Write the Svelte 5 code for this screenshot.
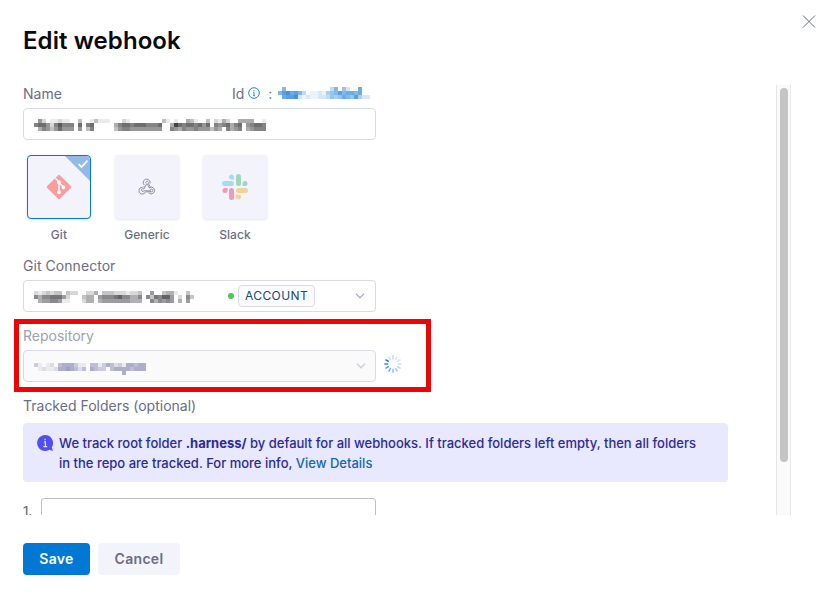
<script>
  // Redacted values are drawn as 4px mosaic cells; each digit is an ink level.
  const masks = {
    id: {
      color: '#2f87da',
      rows: ['06000000000003605200700', '68978630112145686776700', '07889212112235457658422']
    },
    name: {
      color: '#303030',
      rows: [
        '0520112110030013111000210000000031010043100302142004444001',
        '6775268666070670000046776777666700497677675706567467056776',
        '0465357555050360000035665555555500654655655535406456045666'
      ]
    },
    connector: {
      color: '#3a3a40',
      rows: [
        '2123233032200224033322212230050034410030',
        '6466777520003440566678664460637688502063',
        '0455665110002440455555554440064656504050'
      ]
    },
    repository: {
      color: '#62629a',
      rows: ['3101204555311044135423155455', '0121125565424054330455554555', '0000000000000000000000500000']
    }
  };

  const kinds = [
    { id: 'git', label: 'Git', selected: true },
    { id: 'generic', label: 'Generic', selected: false },
    { id: 'slack', label: 'Slack', selected: false }
  ];
  const spokes = Array.from({ length: 12 }, (_, i) => i);
  const spokeOpacity = [0.3, 0.18, 0.2, 0.25, 0.32, 0.38, 0.48, 0.6, 0.72, 0.9, 1, 0.22];
</script>

{#snippet mask(m)}
  <svg class="mask" width={m.rows[0].length * 4} height="12" shape-rendering="crispEdges" aria-hidden="true">
    {#each m.rows as row, y}
      {#each row.split('') as level, x}
        {#if level !== '0'}
          <rect x={x * 4} y={y * 4} width="4" height="4" fill={m.color} fill-opacity={Number(level) / 10} />
        {/if}
      {/each}
    {/each}
  </svg>
{/snippet}

{#snippet chevron()}
  <svg class="chevron" width="10" height="6" viewBox="0 0 10 6" fill="none" stroke="#b0b1c4" stroke-width="1.4"><path d="M1 .7 5 4.7 9 .7" /></svg>
{/snippet}

<div class="dialog">
  <header>
    <h1>Edit webhook</h1>
    <button class="close" aria-label="Close">
      <svg width="14" height="14" viewBox="0 0 14 14" stroke="#6b6d85" stroke-width="1"><path d="M1 .5 13 12.5M13 .5 1 12.5" /></svg>
    </button>
  </header>

  <div class="body">
    <div class="form">
      <div class="name-row">
        <label for="name">Name</label>
        <div class="id">
          <span>Id</span>
          <svg width="12" height="12" viewBox="0 0 12 12" fill="none" stroke="#0278d5"><circle cx="6" cy="6" r="5.3" stroke-width=".9" /><path d="M6 5.2v3.5M6 3v1.2M5.1 5.2H6M5 8.7h2" stroke-width=".8" /></svg>
          <span class="colon">:</span>
          {@render mask(masks.id)}
        </div>
      </div>
      <div class="field" id="name">{@render mask(masks.name)}</div>

      <div class="kinds">
        {#each kinds as kind}
          <div class="kind">
            <div class="tile" class:selected={kind.selected}>
              {#if kind.id === 'git'}
                <svg width="26" height="26" viewBox="0 0 26 26"><rect x="4" y="4" width="18" height="18" rx="1.3" fill="#fa9c9c" transform="rotate(45 13 13)" /><g stroke="#fff" stroke-width="1.4" fill="#fff"><path d="M9.4 4.2 13 8v10M13 8.5l4.5 4.8" fill="none" /><circle cx="13" cy="8.2" r="1.2" /><circle cx="13" cy="18.2" r="1.2" /><circle cx="17.5" cy="13.3" r="1.2" /></g></svg>
                <svg class="corner" width="25" height="25" viewBox="0 0 25 25"><path d="M0 0H21Q25 0 25 4V25Z" fill="#94b8e8" /><path d="m13.5 8 3 3 6-6.3" fill="none" stroke="#fff" stroke-width="1.8" /></svg>
              {:else if kind.id === 'generic'}
                <svg width="18" height="18" viewBox="0 0 18 18" fill="none" stroke="#85879a"><g stroke-width=".9"><path d="M6.2 7.1A3.5 3.5 0 1 1 12 5.6M7.6 5.1A1.5 1.5 0 1 1 10.3 5.6L12.6 9.3M8.9 5.4 5.9 11M6.8 7.8 5.1 9.5M4.4 9.3A3.4 3.4 0 1 0 7.5 13.8H13M5.8 11A1.4 1.4 0 1 0 6 12.8H12M10.8 15A3.4 3.4 0 1 0 11.4 9.6M9.3 6.2 11.7 10.5" /><circle cx="13.5" cy="12.5" r="1.3" /></g></svg>
              {:else}
                <svg width="26" height="26" viewBox="0 0 26 26"><g fill="#a2dcf5"><rect x="0" y="7" width="12" height="5" rx="2.5" /><path d="M12 5.5H9.5A2.5 2.5 0 1 1 12 3Z" /></g><g fill="#9fd7bc"><rect x="14" y="0" width="5" height="12" rx="2.5" /><path d="M20.5 12V9.5A2.5 2.5 0 1 1 23 12Z" /></g><g fill="#f3d199"><rect x="14" y="14" width="12" height="5" rx="2.5" /><path d="M14 20.5h2.5A2.5 2.5 0 1 1 14 23Z" /></g><g fill="#ef9bb3"><rect x="7" y="14" width="5" height="12" rx="2.5" /><path d="M5.5 14v2.5A2.5 2.5 0 1 1 3 14Z" /></g></svg>
              {/if}
            </div>
            <span>{kind.label}</span>
          </div>
        {/each}
      </div>

      <div class="label connector-label">Git Connector</div>
      <div class="field select">
        {@render mask(masks.connector)}
        <i class="dot"></i>
        <span class="tag">ACCOUNT</span>
        {@render chevron()}
      </div>

      <div class="repo">
        <div class="label">Repository</div>
        <div class="repo-row">
          <div class="field select disabled">{@render mask(masks.repository)}{@render chevron()}</div>
          <svg class="spinner" width="18" height="18" viewBox="-9 -9 18 18" stroke="#0278d5" stroke-width="1.4">
            {#each spokes as i}
              <path d="M0-4.8V-8.7" transform="rotate({i * 30})" stroke-opacity={spokeOpacity[i]} />
            {/each}
          </svg>
        </div>
        <div class="highlight"></div>
      </div>

      <div class="label folders-label">Tracked Folders (optional)</div>
      <div class="callout">
        <svg width="16" height="16" viewBox="0 0 16 16"><path d="M8 0a8 8 0 0 1 6.7 12.4L16 16l-3.5-1.3A8 8 0 1 1 8 0Z" fill="#4f4ff5" /><path d="M7 6.8h1.4v4.7M6.4 11.6h3.8M8.1 3.7v1.6" fill="none" stroke="#e8e8ff" stroke-width="1.2" /></svg>
        <p>We track root folder <b>.harness/</b> by default for all webhooks. If tracked folders left empty, then all folders<br />in the repo are tracked. For more info, <span class="link">View Details</span></p>
      </div>
      <div class="folder"><span>1.</span><div class="folder-input"></div></div>
    </div>
    <div class="track"><div class="thumb"></div></div>
  </div>

  <footer>
    <button class="save">Save</button>
    <button class="cancel">Cancel</button>
  </footer>
</div>

<style>
  :global(body) { margin: 0; background: #fff; overflow: hidden; }
  .dialog, .dialog * { box-sizing: border-box; }
  .dialog { width: 816px; height: 593px; font-family: Inter, sans-serif; font-size: 14px; color: #6b6d85; background: #fff; display: flex; flex-direction: column; }
  svg { display: block; flex: none; }
  button { border: 0; font: inherit; padding: 0; }
  header { height: 85px; flex: none; display: flex; justify-content: space-between; padding: 15px 0 0 23px; }
  h1 { margin: 11px 0 0; font-size: 24px; line-height: 29px; font-weight: 600; letter-spacing: .08px; color: #0b0b0d; }
  .close { width: 14px; height: 14px; background: none; }
  .body { height: 430px; flex: none; display: flex; justify-content: space-between; overflow: hidden; padding-right: 25px; }
  .form { width: 705px; margin-left: 23px; }
  .name-row { width: 353px; height: 18px; margin-bottom: 5px; display: flex; line-height: 18px; }
  .name-row label { width: 209px; }
  .id { display: flex; align-items: center; }
  .id svg:first-of-type { margin: -2px 8px 0 4px; }
  .colon { width: 10px; }
  .id :global(.mask) { margin-top: -3px; }
  .field { width: 353px; height: 32px; border: 1px solid #d9dae5; border-radius: 4px; padding: 0 10px; display: flex; align-items: center; background: #fff; }
  .field .mask { margin-top: 2px; }
  .kinds { display: flex; gap: 24px; margin: 15px 0 0 4px; height: 88px; }
  .kind { width: 64px; display: flex; flex-direction: column; align-items: center; gap: 8px; font-size: 12px; line-height: 16px; font-weight: 500; letter-spacing: .1px; }
  .tile { width: 64px; height: 64px; border-radius: 4px; background: #f3f3fb; box-shadow: 0 0 1px #28293d14, 0 1px 3px #60617029; display: flex; align-items: center; justify-content: center; position: relative; flex: none; }
  .tile.selected { border: 1px solid #0278d5; }
  .corner { position: absolute; top: 0; right: 0; }
  .label { height: 18px; line-height: 18px; }
  .connector-label { margin: 14px 0 5px; letter-spacing: .05px; }
  .dot { width: 6px; height: 6px; border-radius: 50%; background: #4dc952; margin-left: 34px; }
  .tag { margin-left: 4px; width: 77px; height: 22px; border: 1px solid #d9dae5; border-radius: 4px; background: #fafbfc; color: #22446f; font-size: 12px; line-height: 20px; text-align: center; letter-spacing: .4px; }
  .select .chevron { margin-left: auto; }
  .repo { position: relative; margin-top: 15px; color: #9ca1af; }
  .repo-row { display: flex; align-items: center; margin-top: 5px; }
  .disabled { background: #fafafb; padding-right: 9px; }
  .disabled .mask { margin-top: 5px; }
  .disabled .chevron { opacity: .6; }
  .spinner { margin: -4px 0 0 8px; }
  .highlight { position: absolute; left: -9px; top: -8px; width: 417px; height: 73px; border: 5px solid #eb0505; }
  .folders-label { margin: 15px 0 8px; }
  .callout { width: 705px; height: 59px; border-radius: 4px; background: #e8e8ff; padding: 10px 14px; display: flex; color: #2c2a96; }
  .callout svg { margin-top: 2px; }
  .callout p { margin: 0 0 0 6px; font-size: 13px; line-height: 20px; font-weight: 500; white-space: nowrap; }
  .callout b { font-weight: 700; }
  .link { color: #1269ad; }
  .folder { display: flex; margin-top: 16px; }
  .folder > span { width: 18px; line-height: 17px; padding-top: 5px; font-size: 13px; font-weight: 500; }
  .folder-input { width: 335px; height: 32px; border: 1px solid #c0c0c4; border-radius: 3px; }
  .track { width: 15px; height: 430px; background: #fafafa; border-left: 1px solid #e5e5e5; border-right: 1px solid #e8e8e8; padding: 3px 0 0 3px; }
  .thumb { width: 8px; height: 374px; border-radius: 4px; background: #c4c4c4; }
  footer { display: flex; gap: 8px; padding: 28px 0 0 23px; }
  footer button { height: 32px; border-radius: 4px; font-weight: 600; font-size: 14px; letter-spacing: .3px; padding-bottom: 1px; }
  .save { width: 67px; background: #0278d5; color: #fff; }
  .cancel { width: 82px; background: #f3f3fb; color: #6b6d85; }
</style>
